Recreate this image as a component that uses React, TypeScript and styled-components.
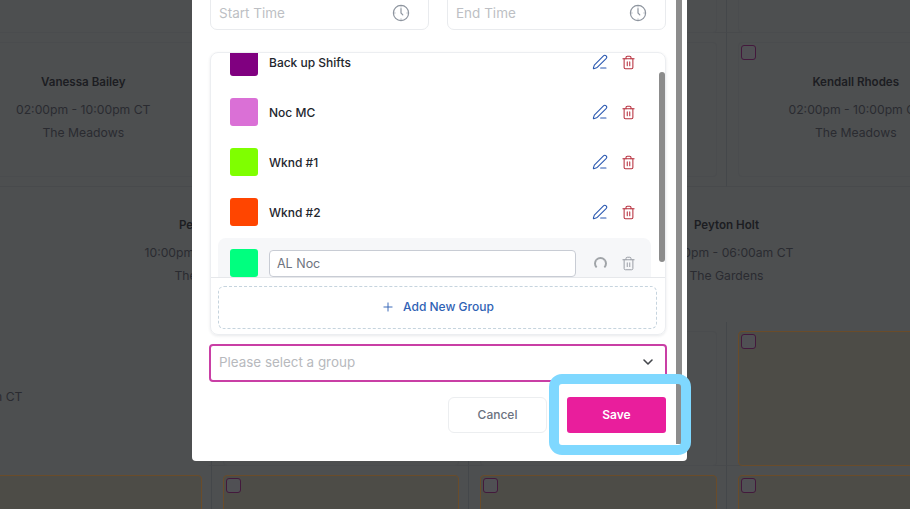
import styled, { createGlobalStyle } from "styled-components";
import { ChevronDown, PenLine, Plus, Trash2 } from "lucide-react";

type Group = { name: string; color: string };

const groups: Group[] = [
  { name: "Back up Shifts", color: "#800080" },
  { name: "Noc MC", color: "#da70d6" },
  { name: "Wknd #1", color: "#7fff00" },
  { name: "Wknd #2", color: "#ff4500" },
];

const GlobalStyle = createGlobalStyle`
  html, body {
    margin: 0;
    padding: 0;
    background: #4d4f50;
  }
  * {
    box-sizing: border-box;
  }
`;

const Page = styled.div`
  position: relative;
  width: 910px;
  height: 509px;
  overflow: hidden;
  background: #4d4f50;
  font-family: Inter, "Open Sans", sans-serif;
`;

// the calendar sits behind the modal, colours are already dimmed
const Board = styled.div`
  display: grid;
  grid-template-columns: repeat(5, 257.5px);
  grid-template-rows: 144px 154px 135px 144px 144px;
  width: 1288px;
  margin: -111px 0 0 -303.5px;
`;

const Cell = styled.div<{ $wide?: boolean; $flat?: boolean }>`
  grid-column: span ${({ $wide }) => ($wide ? 2 : 1)};
  padding: ${({ $flat }) => ($flat ? "0" : "9px 9px 0 11px")};
  border-right: ${({ $flat }) => ($flat ? "none" : "1px solid #44474a")};
  border-bottom: 1px solid #484a4c;
`;

const EdgeCell = styled(Cell)`
  padding: 9px 0 0 4px;
  border-right: 1px solid #44474a;
`;

const Card = styled.div<{ $open?: boolean; $flat?: boolean }>`
  position: relative;
  display: flex;
  flex-direction: column;
  align-items: center;
  justify-content: center;
  height: 135px;
  padding-bottom: ${({ $flat }) => ($flat ? "8px" : "5px")};
  border-radius: 4px;
  border: 1px solid ${({ $open, $flat }) => ($flat ? "transparent" : $open ? "#6a4c2a" : "#4a4c4e")};
  background: ${({ $open }) => ($open ? "#4d4c47" : "#4d4f50")};
`;

const EdgeCard = styled(Card)`
  padding-bottom: 4px;
`;

const Tick = styled.span`
  position: absolute;
  top: 2px;
  left: 2px;
  width: 15px;
  height: 15px;
  border-radius: 3px;
  border: 1px solid #43193c;
  background: #505054;
`;

const Person = styled.div`
  font-size: 11.6px;
  font-weight: 600;
  color: #1c1d22;
  margin-bottom: 13px;
`;

const Detail = styled.div`
  font-size: 12.2px;
  color: #2a2b30;
  white-space: nowrap;
  & + & {
    margin-top: 8px;
  }
`;

const Modal = styled.div`
  position: absolute;
  top: -40px;
  left: 192px;
  width: 495px;
  height: 501px;
  padding: 0 21px 0 18px;
  background: #fff;
  border-radius: 4px;
`;

const ModalThumb = styled.div`
  position: absolute;
  top: 0;
  right: 5px;
  width: 6px;
  height: 484px;
  background: #8c8c8c;
`;

const TimeRow = styled.div`
  display: grid;
  grid-template-columns: 219px 219px;
  justify-content: space-between;
`;

const TimeField = styled.div`
  display: flex;
  align-items: center;
  justify-content: space-between;
  height: 70px;
  padding: 35px 18px 0 8px;
  border: 1px solid #e9ebee;
  border-radius: 7px;
  font-size: 13.5px;
  color: #bdbfc4;
`;

const Panel = styled.div`
  position: relative;
  height: 283px;
  margin-top: 22px;
  border: 1px solid #eceef1;
  border-radius: 8px;
  box-shadow: 0 1px 3px rgba(30, 40, 60, 0.1);
  overflow: hidden;
`;

const GroupList = styled.div`
  height: 225px;
  padding: 0 14px 0 7px;
  overflow: hidden;
  border-bottom: 1px solid #e6e8eb;
`;

const Row = styled.div<{ $first?: boolean; $editing?: boolean }>`
  display: flex;
  align-items: center;
  height: 50px;
  margin-top: ${({ $first, $editing }) => ($first ? "-16px" : $editing ? "1px" : "0")};
  padding: 0 15px 0 12px;
  border-radius: 8px;
  background: ${({ $editing }) => ($editing ? "#f6f7f9" : "transparent")};
`;

const Swatch = styled.span<{ $color: string }>`
  flex: none;
  width: 28px;
  height: 28px;
  margin-right: 11px;
  border-radius: 3px;
  background: ${({ $color }) => $color};
`;

const Name = styled.span`
  flex: 1;
  font-size: 12px;
  font-weight: 500;
  color: #23262d;
`;

const NameInput = styled.div`
  flex: none;
  width: 307px;
  height: 27px;
  margin-right: 14px;
  padding: 0 7px;
  line-height: 25px;
  font-size: 12.5px;
  color: #6e7480;
  background: #fff;
  border: 1px solid #c8ccd4;
  border-radius: 4px;
`;

const RowActions = styled.div`
  display: flex;
  align-items: center;
  gap: 13px;
  margin-left: auto;
`;

const Spinner = styled.span`
  width: 13px;
  height: 13px;
  margin: 0 1px 0 2px;
  border: 2px solid #a0a4a8;
  border-bottom-color: transparent;
  border-radius: 50%;
`;

const ListThumb = styled.div`
  position: absolute;
  top: 19px;
  right: 0;
  width: 6px;
  height: 190px;
  border-radius: 3px;
  background: #8c8c8c;
`;

const AddButton = styled.div`
  display: flex;
  align-items: center;
  justify-content: center;
  gap: 8px;
  height: 43px;
  margin: 8px 8px 0 7px;
  padding-bottom: 2px;
  border: 1px dashed #c6d4de;
  border-radius: 6px;
  font-size: 12px;
  font-weight: 500;
  color: #2f62b5;
`;

const GroupSelect = styled.div`
  display: flex;
  align-items: center;
  justify-content: space-between;
  height: 38px;
  margin: 9px -1px 0 -1px;
  padding: 0 9px 2px 8px;
  border: 2px solid #c93fa5;
  border-radius: 4px;
  font-size: 13.4px;
  color: #b7b9bd;
`;

const Footer = styled.div`
  display: flex;
  justify-content: flex-end;
  gap: 20px;
  margin-top: 15px;
`;

const CancelButton = styled.button`
  width: 99px;
  height: 36px;
  padding-bottom: 2px;
  border: 1px solid #eceef0;
  border-radius: 6px;
  background: #fff;
  font: 500 12px Inter, sans-serif;
  color: #6b7280;
`;

const SaveButton = styled.button`
  width: 99px;
  height: 36px;
  padding-bottom: 2px;
  border: none;
  border-radius: 3px;
  background: #e91e9c;
  font: 600 12px Inter, sans-serif;
  color: #fff;
`;

const Highlight = styled.div`
  position: absolute;
  top: 374px;
  left: 549px;
  width: 142px;
  height: 81px;
  border: 10px solid #7fd8ff;
  border-radius: 13px;
`;

const ClockIcon = () => (
  <svg width="18" height="18" viewBox="0 0 18 18" fill="none" stroke="#8e959f" strokeWidth="1.2" strokeLinecap="round">
    <circle cx="9" cy="9" r="7.6" />
    <path d="M9 4.5V9l1.8 1.8" />
    <path d="M9 2.6v.5M9 14.9v.5M2.6 9h.5M14.9 9h.5" strokeWidth="0.8" />
  </svg>
);

const shift = (name: string, time: string, place: string, wide = false) => (
  <Cell $wide={wide} $flat={wide}>
    <Card $flat={wide}>
      {!wide && <Tick />}
      <Person>{name}</Person>
      <Detail>{time}</Detail>
      <Detail>{place}</Detail>
    </Card>
  </Cell>
);

const emptySlot = (open = false) => (
  <Cell>
    <Card $open={open}>{open && <Tick />}</Card>
  </Cell>
);

export default function App() {
  return (
    <Page>
      <GlobalStyle />
      <Board>
        {emptySlot()}
        {emptySlot()}
        {emptySlot()}
        {emptySlot()}
        {emptySlot()}

        {emptySlot()}
        {shift("Vanessa Bailey", "02:00pm - 10:00pm CT", "The Meadows")}
        {emptySlot()}
        {emptySlot()}
        {shift("Kendall Rhodes", "02:00pm - 10:00pm CT", "The Meadows")}

        <Cell $flat />
        {shift("Peyton Holt", "10:00pm - 06:00am CT", "The Gardens", true)}
        {shift("Peyton Holt", "10:00pm - 06:00am CT", "The Gardens", true)}

        <EdgeCell $wide $flat>
          <EdgeCard $flat>
            <Detail>10:00pm - 06:00am CT</Detail>
          </EdgeCard>
        </EdgeCell>
        {emptySlot()}
        {emptySlot()}
        {emptySlot(true)}

        {emptySlot(true)}
        {emptySlot(true)}
        {emptySlot(true)}
        {emptySlot(true)}
        {emptySlot(true)}
      </Board>
      <Modal>
        <ModalThumb />
        <TimeRow>
          <TimeField>
            Start Time
            <ClockIcon />
          </TimeField>
          <TimeField>
            End Time
            <ClockIcon />
          </TimeField>
        </TimeRow>
        <Panel>
          <GroupList>
            {groups.map((group, i) => (
              <Row key={group.name} $first={i === 0}>
                <Swatch $color={group.color} />
                <Name>{group.name}</Name>
                <RowActions>
                  <PenLine size={16} color="#2a58b0" strokeWidth={1.6} />
                  <Trash2 size={15} color="#b8303e" strokeWidth={1.7} />
                </RowActions>
              </Row>
            ))}
            <Row $editing>
              <Swatch $color="#00ff7f" />
              <NameInput>AL Noc</NameInput>
              <RowActions>
                <Spinner />
                <Trash2 size={15} color="#9a9ea6" strokeWidth={1.6} />
              </RowActions>
            </Row>
          </GroupList>
          <ListThumb />
          <AddButton>
            <Plus size={14} strokeWidth={1.6} />
            Add New Group
          </AddButton>
        </Panel>
        <GroupSelect>
          Please select a group
          <ChevronDown size={16} color="#44474c" strokeWidth={2.4} />
        </GroupSelect>
        <Footer>
          <CancelButton>Cancel</CancelButton>
          <SaveButton>Save</SaveButton>
        </Footer>
      </Modal>
      <Highlight />
    </Page>
  );
}
